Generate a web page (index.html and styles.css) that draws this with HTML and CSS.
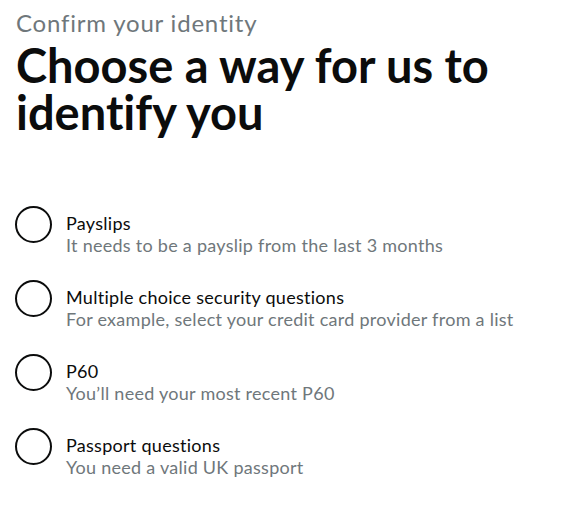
FILE: index.html
```html
<!DOCTYPE html>
<html lang="en">
<head>
<meta charset="utf-8">
<title>Choose a way for us to identify you</title>
<link rel="stylesheet" href="styles.css">
</head>
<body>
<main class="page">
  <span class="caption">Confirm your identity</span>
  <h1 class="heading">Choose a way for us to identify you</h1>
  <div class="radios">
    <label class="radio">
      <input class="radio-input" type="radio" name="method">
      <span class="radio-mark"></span>
      <span class="radio-text">
        <span class="radio-label">Payslips</span>
        <span class="radio-hint">It needs to be a payslip from the last 3 months</span>
      </span>
    </label>
    <label class="radio">
      <input class="radio-input" type="radio" name="method">
      <span class="radio-mark"></span>
      <span class="radio-text">
        <span class="radio-label">Multiple choice security questions</span>
        <span class="radio-hint">For example, select your credit card provider from a list</span>
      </span>
    </label>
    <label class="radio">
      <input class="radio-input" type="radio" name="method">
      <span class="radio-mark"></span>
      <span class="radio-text">
        <span class="radio-label">P60</span>
        <span class="radio-hint">You’ll need your most recent P60</span>
      </span>
    </label>
    <label class="radio">
      <input class="radio-input" type="radio" name="method">
      <span class="radio-mark"></span>
      <span class="radio-text">
        <span class="radio-label">Passport questions</span>
        <span class="radio-hint">You need a valid UK passport</span>
      </span>
    </label>
  </div>
</main>
</body>
</html>
```
FILE: styles.css
```css
html, body {
  margin: 0;
  padding: 0;
  background: #ffffff;
}
body {
  font-family: Lato, "Noto Sans", "Liberation Sans", sans-serif;
  font-variant-ligatures: none;
  color: #0b0c0c;
}
.page {
  padding: 8px 16px 0 16px;
}
.caption {
  display: block;
  font-size: 24px;
  line-height: 30px;
  letter-spacing: 0.8px;
  color: #6f777b;
}
.heading {
  margin: 4px 0 0 0;
  font-size: 47px;
  line-height: 47px;
  font-weight: 700;
  letter-spacing: 0;
}
.radios {
  margin-top: 70px;
  display: flex;
  flex-direction: column;
  gap: 24px;
}
.radio {
  display: flex;
  align-items: flex-start;
  gap: 13px;
}
.radio-input {
  position: absolute;
  opacity: 0;
  width: 1px;
  height: 1px;
}
.radio-mark {
  flex: none;
  width: 33px;
  height: 33px;
  border: 2px solid #0b0c0c;
  border-radius: 50%;
  margin-left: -1px;
  margin-right: 1px;
}
.radio-text {
  display: flex;
  flex-direction: column;
  padding-top: 6px;
}
.radio-label {
  font-size: 18px;
  line-height: 22px;
  letter-spacing: 0.28px;
}
.radio-hint {
  font-size: 18px;
  line-height: 22px;
  letter-spacing: 0.27px;
  color: #6f777b;
}
```
